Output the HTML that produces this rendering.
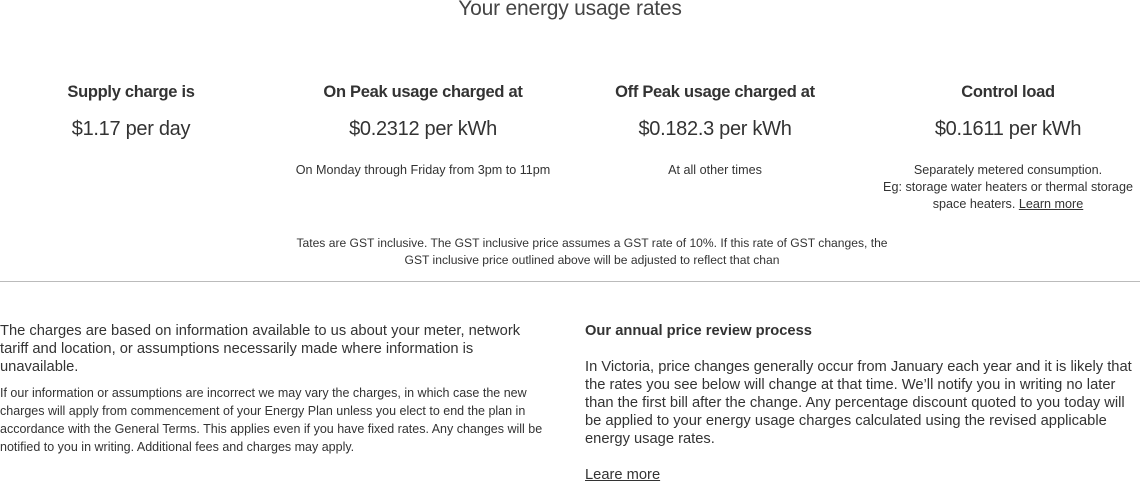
<!DOCTYPE html>
<html><head><meta charset="utf-8"><style>
body{margin:0;width:1140px;height:482px;overflow:hidden;background:#fff;color:#333;font-family:"Liberation Sans",sans-serif;position:relative}
.a{position:absolute;white-space:nowrap}
.c{text-align:center;width:292px}
.h{font-weight:bold;font-size:16.5px;letter-spacing:-0.3px}
.p{font-size:20px;letter-spacing:-0.3px}
.s{font-size:12.6px;line-height:17px}
.b{font-size:14.7px;line-height:18px}
.m{font-size:12.5px;line-height:18px}
a{color:#333;text-decoration:underline}
</style></head><body>
<div class="a" style="left:0;width:1140px;text-align:center;top:-3px;font-size:21px;font-weight:300;letter-spacing:-0.2px;color:#444">Your energy usage rates</div>

<div class="a c h" style="left:-15px;top:83px">Supply charge is</div>
<div class="a c p" style="left:-15px;top:118px">$1.17 per day</div>

<div class="a c h" style="left:277px;top:83px">On Peak usage charged at</div>
<div class="a c p" style="left:277px;top:118px">$0.2312 per kWh</div>
<div class="a c s" style="left:277px;top:162px">On Monday through Friday from 3pm to 11pm</div>

<div class="a c h" style="left:569px;top:83px">Off Peak usage charged at</div>
<div class="a c p" style="left:569px;top:118px">$0.182.3 per kWh</div>
<div class="a c s" style="left:569px;top:162px">At all other times</div>

<div class="a c h" style="left:862px;top:83px">Control load</div>
<div class="a c p" style="left:862px;top:118px">$0.1611 per kWh</div>
<div class="a c s" style="left:862px;top:162px">Separately metered consumption.<br>Eg: storage water heaters or thermal storage<br>space heaters. <a>Learn more</a></div>

<div class="a" style="left:0;width:1184px;text-align:center;top:235px;font-size:12.1px;line-height:17px">Tates are GST inclusive. The GST inclusive price assumes a GST rate of 10%. If this rate of GST changes, the<br>GST inclusive price outlined above will be adjusted to reflect that chan</div>

<div class="a" style="left:0;top:281px;width:1140px;height:1px;background:#bbb"></div>

<div class="a b" style="left:0;top:322px">The charges are based on information available to us about your meter, network<br>tariff and location, or assumptions necessarily made where information is<br>unavailable.</div>
<div class="a m" style="left:0;top:384px">If our information or assumptions are incorrect we may vary the charges, in which case the new<br>charges will apply from commencement of your Energy Plan unless you elect to end the plan in<br>accordance with the General Terms. This applies even if you have fixed rates. Any changes will be<br>notified to you in writing. Additional fees and charges may apply.</div>

<div class="a b" style="left:585px;top:322px;font-weight:bold">Our annual price review process</div>
<div class="a b" style="left:585px;top:358px">In Victoria, price changes generally occur from January each year and it is likely that<br>the rates you see below will change at that time. We’ll notify you in writing no later<br>than the first bill after the change. Any percentage discount quoted to you today will<br>be applied to your energy usage charges calculated using the revised applicable<br>energy usage rates.</div>
<div class="a b" style="left:585px;top:466px"><a>Leare more</a></div>
</body></html>
